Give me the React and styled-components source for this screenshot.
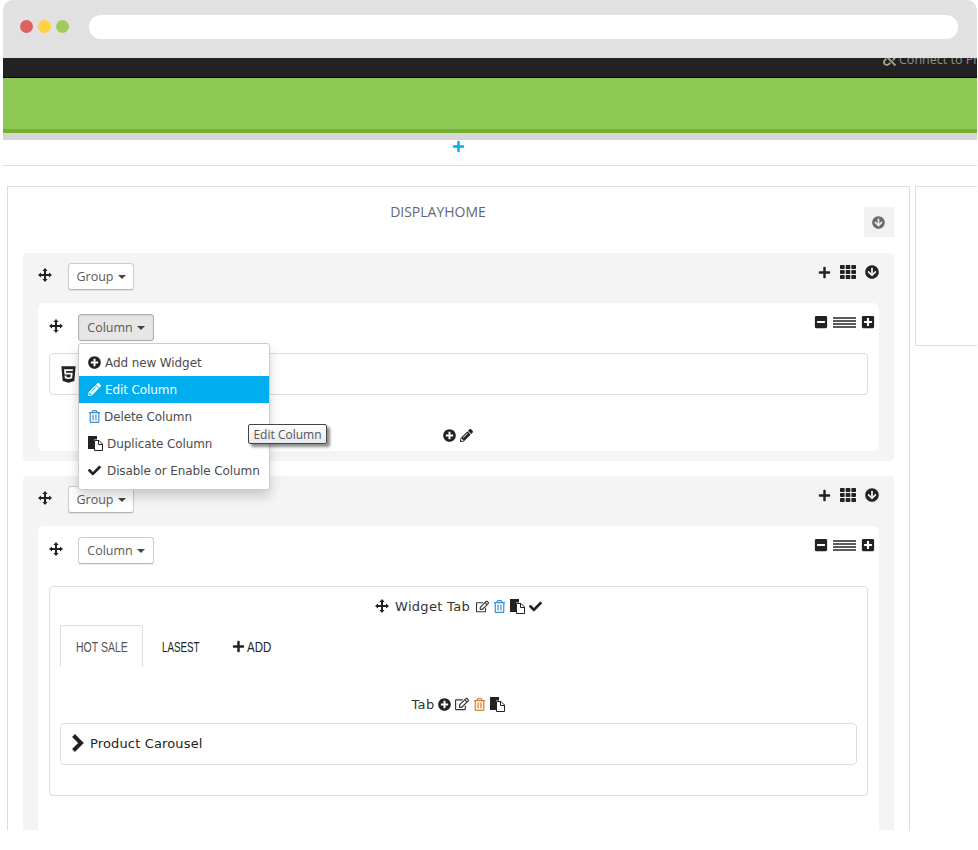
import React from 'react'
import styled, { createGlobalStyle } from 'styled-components'
import {
  FaPlus, FaTh, FaArrowCircleDown, FaMinusSquare, FaPlusSquare, FaHtml5, FaPlusCircle,
  FaPencilAlt, FaRegEdit, FaRegTrashAlt, FaCheck, FaUnlink,
} from 'react-icons/fa'

const GlobalStyle = createGlobalStyle`
  html, body { margin: 0; padding: 0; background: #fff; }
  body { font-family: "Open Sans", "Liberation Sans", sans-serif; color: #222; }
  * { box-sizing: border-box; }
`

const Frame = styled.div`
  margin-left: 3px;
  width: 974px;
  height: 830px;
  overflow: hidden;
  background: #fff;
`
const Chrome = styled.div`
  height: 58px;
  background: #e1e1e1;
  border-radius: 10px 10px 0 0;
  display: flex;
  align-items: flex-start;
  padding: 15px 19px 0 17px;
`
const Dots = styled.div`
  display: flex;
  gap: 5px;
  padding-top: 5px;
  margin-right: 20px;
`
const Dot = styled.span`
  width: 13px;
  height: 13px;
  border-radius: 50%;
  background: ${p => p.$color};
`
const AddressBar = styled.div`
  flex: 1;
  height: 24px;
  border-radius: 12px;
  background: #fff;
`
const TopBar = styled.div`
  height: 20px;
  background: #222;
  border-bottom: 1px solid #000;
  overflow: hidden;
  display: flex;
  padding-left: 880px;
`
const Connect = styled.span`
  display: flex;
  align-items: center;
  gap: 3px;
  margin-top: -6px;
  height: 14px;
  white-space: nowrap;
  color: #8f8f8f;
  font-size: 12.5px;
  svg { color: #a89f88; font-size: 13px; }
`
const Banner = styled.div`
  height: 55px;
  background: #8cca55;
  border-bottom: 4px solid #72b033;
`
const BannerShade = styled.div`
  height: 7px;
  background: #d6d6d6;
`
const AddBar = styled.div`
  height: 26px;
  border-bottom: 1px solid #ddd;
  display: flex;
  justify-content: center;
  padding-right: 64px;
  color: #00aeef;
  font-size: 13px;
`
const Workspace = styled.div`
  display: flex;
  align-items: flex-start;
  gap: 5px;
  padding: 20px 0 0 4px;
`
const MainPanel = styled.div`
  width: 903px;
  flex: none;
  min-height: 700px;
  border: 1px solid #ddd;
  border-bottom: 0;
  padding: 0 15px;
`
const SidePanel = styled.div`
  flex: 1;
  height: 160px;
  border: 1px solid #ddd;
  border-right: 0;
`
const PanelHead = styled.div`
  height: 66px;
  display: flex;
  align-items: flex-start;
  padding-top: 20px;
`
const PanelTitle = styled.div`
  flex: 1;
  padding-right: 11px;
  margin-top: -4px;
  text-align: center;
  font-size: 14px;
  line-height: 18px;
  color: #5f6877;
`
const CollapseBox = styled.div`
  width: 30px;
  height: 30px;
  padding-right: 1px;
  background: #f2f2f2;
  color: #6b6b6b;
  display: flex;
  align-items: center;
  justify-content: center;
  font-size: 13px;
`
const Group = styled.section`
  background: #f4f4f4;
  border-radius: 4px;
  padding: 10px 15px;
  & + & { margin-top: 15px; }
`
const GroupBar = styled.div`
  height: 40px;
  display: flex;
  align-items: flex-start;
`
const ColumnCard = styled.div`
  background: #fff;
  border-radius: 6px;
  padding: 11px 11px 0;
  min-height: ${p => p.$tall ? '400px' : '148px'};
`
const ColumnBar = styled.div`
  height: 39px;
  display: flex;
  align-items: flex-start;
`
const MoveBox = styled.span`
  width: ${p => p.$wide}px;
  flex: none;
  display: flex;
  padding-top: 5px;
`
const DropWrap = styled.div`
  position: relative;
`
const DropButton = styled.button`
  width: ${p => p.$w}px;
  display: flex;
  align-items: center;
  justify-content: center;
  gap: 4px;
  height: 27px;
  padding: 0;
  font: 12.5px "Open Sans", sans-serif;
  color: #5a5a5a;
  background: ${p => p.$active ? '#e6e6e6' : '#fff'};
  border: 1px solid ${p => p.$active ? '#adadad' : '#ccc'};
  border-bottom-color: ${p => p.$active ? '#adadad' : '#b5b5b5'};
  border-radius: 3px;
  box-shadow: ${p => p.$active ? 'inset 0 1px 2px rgba(0,0,0,.1)' : '0 1px 1px rgba(0,0,0,.08)'};
  &::after {
    content: "";
    border-top: 4px solid #444;
    border-left: 4px solid transparent;
    border-right: 4px solid transparent;
  }
`
const GroupTools = styled.div`
  margin-left: auto;
  display: flex;
  align-items: center;
  gap: 9px;
  height: 18px;
  color: #222;
`
const ColumnTools = styled.div`
  margin: -1px -7px 0 auto;
  display: flex;
  align-items: center;
  gap: 5px;
  height: 18px;
  color: #222;
`
const Lines = styled.span`
  width: 23px;
  height: 11px;
  background: repeating-linear-gradient(#5a5a5a 0 2px, #fff 2px 3px);
`
const WidgetRow = styled.div`
  height: 42px;
  border: 1px solid #ddd;
  border-radius: 4px;
  display: flex;
  align-items: center;
  padding-left: 9px;
  font-size: 19px;
`
const RowActions = styled.div`
  display: flex;
  justify-content: center;
  gap: 4px;
  align-items: center;
  font-size: 13px;
  color: #222;
  margin-top: 34px;
  padding-right: 2px;
`
const Menu = styled.div`
  position: absolute;
  z-index: 5;
  top: 29px;
  left: 0;
  width: 192px;
  height: 147px;
  padding: 5px 0;
  background: #fff;
  border: 1px solid #ccc;
  border-radius: 3px;
  box-shadow: 0 6px 12px rgba(0,0,0,.18);
`
const MenuItem = styled.div`
  height: 27px;
  display: flex;
  align-items: center;
  gap: ${p => p.$gap || 4}px;
  padding-left: 9px;
  font: 12px "DejaVu Sans", sans-serif;
  letter-spacing: -0.1px;
  white-space: nowrap;
  color: ${p => p.$active ? '#fff' : '#4c4c4c'};
  background: ${p => p.$active ? '#00aeef' : 'transparent'};
`
const Tip = styled.div`
  position: absolute;
  z-index: 6;
  left: 169px;
  top: 80px;
  width: 79px;
  height: 20px;
  display: flex;
  align-items: center;
  justify-content: center;
  font-size: 12px;
  white-space: nowrap;
  color: #555;
  background: linear-gradient(#fff, #e8e8f0);
  border: 1px solid #444;
  border-radius: 2px;
  box-shadow: 3px 3px 3px rgba(0,0,0,.45);
`
const TabPanel = styled.div`
  height: 210px;
  margin-top: 10px;
  border: 1px solid #ddd;
  border-radius: 4px;
  padding: 0 10px;
`
const PanelLine = styled.div`
  display: flex;
  align-items: center;
  justify-content: center;
  gap: 4px;
  font: 13px "DejaVu Sans", sans-serif;
  letter-spacing: 0.3px;
  color: #333;
  height: ${p => p.$h}px;
  padding-top: ${p => p.$top || 0}px;
`
const LineText = styled.span`
  margin: 0 2px;
`
const Tabs = styled.div`
  display: flex;
  height: 42px;
  font: 14px "Liberation Sans", sans-serif;
`
const TabItem = styled.div`
  width: ${p => p.$w}px;
  display: flex;
  align-items: center;
  gap: 2px;
  padding-left: ${p => p.$left}px;
  color: ${p => p.$active ? '#555' : '#222'};
  border: 1px solid ${p => p.$active ? '#ddd' : 'transparent'};
  border-bottom: 0;
  border-radius: 3px 3px 0 0;
`
const TabLabel = styled.span`
  display: inline-block;
  white-space: nowrap;
  transform: scaleX(${p => p.$scale});
  transform-origin: left center;
`
const CarouselRow = styled.div`
  height: 42px;
  border: 1px solid #ddd;
  border-radius: 4px;
  display: flex;
  align-items: center;
  gap: 6px;
  padding: 0 0 2px 10px;
  font: 13px "DejaVu Sans", sans-serif;
  letter-spacing: 0.15px;
  color: #222;
`
const Trash = styled(FaRegTrashAlt)`
  color: ${p => p.$color};
  font-size: 13px;
`

const MoveIcon = () => (
  <svg width="14" height="14" viewBox="0 0 14 14" fill="#222">
    <path d="M7 0l2.6 3H8v3h3V4.4l3 2.6-3 2.6V8H8v3h1.6L7 14l-2.6-3H6V8H3v1.6L0 7l3-2.6V6h3V3H4.4z" />
  </svg>
)

const CopyIcon = () => (
  <svg width="15" height="15" viewBox="0 0 15 15">
    <path d="M0 0h9v3.5H6V13H0z" fill="#222" />
    <path d="M6.5 4.5h4.5l3.5 3.5v6.5h-8z" fill="#fff" stroke="#222" />
    <path d="M10.5 4.5v4h4" fill="none" stroke="#222" />
  </svg>
)

const ChevronIcon = () => (
  <svg width="13" height="18" viewBox="0 0 13 18">
    <path d="M2.5 1.5L10 9l-7.5 7.5" fill="none" stroke="#222" strokeWidth="4" />
  </svg>
)

const GroupIcons = () => (
  <GroupTools>
    <FaPlus size={13} /><FaTh size={16} /><FaArrowCircleDown size={14} />
  </GroupTools>
)

const ColumnIcons = () => (
  <ColumnTools>
    <FaMinusSquare size={14} /><Lines /><FaPlusSquare size={14} />
  </ColumnTools>
)

const App = () => (
  <>
    <GlobalStyle />
    <Frame>
      <Chrome>
        <Dots>
          <Dot $color="#dc6262" />
          <Dot $color="#ffd042" />
          <Dot $color="#a1cb5c" />
        </Dots>
        <AddressBar />
      </Chrome>
      <TopBar>
        <Connect><FaUnlink /> Connect to PrestaShop</Connect>
      </TopBar>
      <Banner />
      <BannerShade />
      <AddBar><FaPlus /></AddBar>
      <Workspace>
        <MainPanel>
          <PanelHead>
            <PanelTitle>DISPLAYHOME</PanelTitle>
            <CollapseBox><FaArrowCircleDown /></CollapseBox>
          </PanelHead>

          <Group>
            <GroupBar>
              <MoveBox $wide={30}><MoveIcon /></MoveBox>
              <DropButton $w={66}>Group</DropButton>
              <GroupIcons />
            </GroupBar>
            <ColumnCard>
              <ColumnBar>
                <MoveBox $wide={29}><MoveIcon /></MoveBox>
                <DropWrap>
                  <DropButton $w={76} $active>Column</DropButton>
                  <Menu>
                    <MenuItem><FaPlusCircle size={13} color="#222" /> Add new Widget</MenuItem>
                    <MenuItem $active><FaPencilAlt size={13} /> Edit Column</MenuItem>
                    <MenuItem $gap={3}><Trash $color="#3f8fcf" /> Delete Column</MenuItem>
                    <MenuItem><CopyIcon /> Duplicate Column</MenuItem>
                    <MenuItem $gap={6}><FaCheck size={13} color="#222" /> Disable or Enable Column</MenuItem>
                    <Tip>Edit Column</Tip>
                  </Menu>
                </DropWrap>
                <ColumnIcons />
              </ColumnBar>
              <WidgetRow><FaHtml5 /></WidgetRow>
              <RowActions><FaPlusCircle /><FaPencilAlt /></RowActions>
            </ColumnCard>
          </Group>

          <Group>
            <GroupBar>
              <MoveBox $wide={30}><MoveIcon /></MoveBox>
              <DropButton $w={66}>Group</DropButton>
              <GroupIcons />
            </GroupBar>
            <ColumnCard $tall>
              <ColumnBar>
                <MoveBox $wide={29}><MoveIcon /></MoveBox>
                <DropButton $w={76}>Column</DropButton>
                <ColumnIcons />
              </ColumnBar>
              <TabPanel>
                <PanelLine $h={38}>
                  <MoveIcon /><LineText>Widget Tab</LineText><FaRegEdit size={13} /><Trash $color="#3f8fcf" /><CopyIcon /><FaCheck size={13} color="#222" />
                </PanelLine>
                <Tabs>
                  <TabItem $active $w={83} $left={15}><TabLabel $scale={0.75}>HOT SALE</TabLabel></TabItem>
                  <TabItem $w={88} $left={18}><TabLabel $scale={0.7}>LASEST</TabLabel></TabItem>
                  <TabItem $w={60} $left={0}><FaPlus size={13} color="#222" /><TabLabel $scale={0.82}>ADD</TabLabel></TabItem>
                </Tabs>
                <PanelLine $h={56} $top={18}>
                  Tab <FaPlusCircle size={13} color="#222" /><FaRegEdit size={14} /><Trash $color="#d9822b" /><CopyIcon />
                </PanelLine>
                <CarouselRow><ChevronIcon /> Product Carousel</CarouselRow>
              </TabPanel>
            </ColumnCard>
          </Group>
        </MainPanel>
        <SidePanel />
      </Workspace>
    </Frame>
  </>
)

export default App
